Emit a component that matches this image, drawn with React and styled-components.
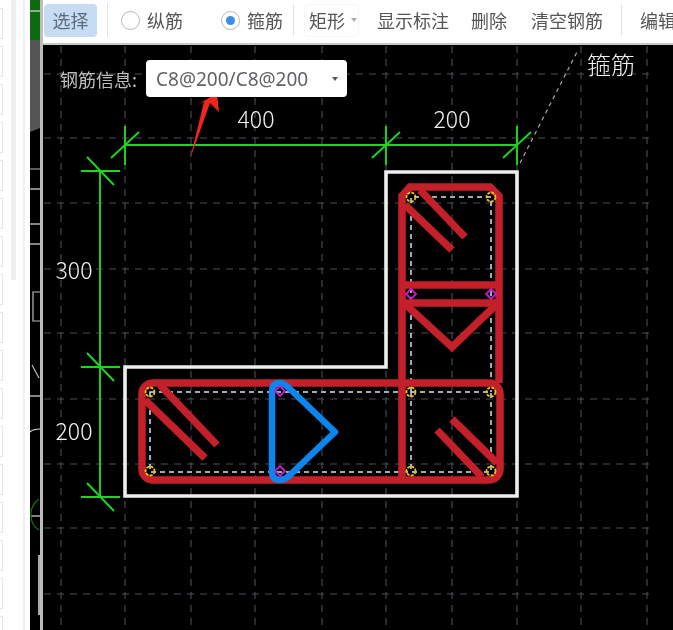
import React from "react";
import styled, { createGlobalStyle } from "styled-components";

const Global = createGlobalStyle`
  html, body { margin: 0; padding: 0; background: #fff; overflow: hidden; }
  body { font-family: "Noto Sans CJK SC", "Liberation Sans", sans-serif; }
`;

const Page = styled.div`
  display: flex;
  width: 673px;
  height: 630px;
  overflow: hidden;
  filter: blur(0.45px);
`;

const SidePanel = styled.div`
  width: 30px;
  flex: none;
  display: flex;
  background: #fff;
`;

const ListColumn = styled.div`
  width: 11px;
  flex: none;
  display: flex;
  flex-direction: column;
  gap: 7px;
  padding-top: 8px;
`;

const ListBox = styled.div`
  width: 2px;
  height: 29px;
  flex: none;
  border: 1px solid #e6e6e6;
  border-left: none;
  background: #fff;
`;

const ScrollTrack = styled.div`
  width: 5px;
  height: 280px;
  flex: none;
  background: #efefef;
`;

const PanelEdge = styled.div`
  width: 2px;
  height: 100%;
  margin-left: 7px;
  flex: none;
  background: #f0f0f0;
`;

const StripDrawing = styled.svg`
  width: 13px;
  height: 630px;
  flex: none;
  display: block;
`;

const Main = styled.div`
  flex: 1;
  min-width: 0;
  display: flex;
  flex-direction: column;
`;

const Toolbar = styled.div`
  box-sizing: content-box;
  height: 40px;
  flex: none;
  display: flex;
  align-items: center;
  background: #fff;
  border-bottom: 2px solid #c9c9c9;
  padding: 0 0 3px 1px;
  white-space: nowrap;
  color: #555;
  font-size: 18px;
`;

const SelectButton = styled.div`
  width: 53px;
  height: 33px;
  flex: none;
  display: flex;
  align-items: center;
  justify-content: center;
  background: #c6dcf3;
  border-radius: 4px;
  color: #5f6b78;
`;

const Divider = styled.div`
  width: 1px;
  height: 34px;
  flex: none;
  background: #e2e2e2;
  margin: 0 ${(p) => p.$right}px 0 ${(p) => p.$left}px;
`;

const RadioItem = styled.label`
  display: flex;
  align-items: center;
  gap: 7px;
  flex: none;
  margin-right: ${(p) => p.$right}px;
`;

const RadioCircle = styled.span`
  width: 19px;
  height: 19px;
  box-sizing: border-box;
  flex: none;
  display: flex;
  align-items: center;
  justify-content: center;
  border-radius: 50%;
  border: 1.5px solid #b8b8b8;
  background: #fff;
  &::after {
    content: "";
    width: 9px;
    height: 9px;
    border-radius: 50%;
    background: ${(p) => (p.$on ? "#3b8ee8" : "transparent")};
  }
`;

const ShapeSelect = styled.div`
  width: 55px;
  height: 33px;
  flex: none;
  box-sizing: border-box;
  display: flex;
  align-items: center;
  gap: 6px;
  padding-left: 4px;
  border: 1px solid #f6f6f6;
  border-radius: 4px;
`;

const Caret = styled.span`
  width: 0;
  height: 0;
  flex: none;
  border-left: 3.5px solid transparent;
  border-right: 3.5px solid transparent;
  border-top: 4px solid ${(p) => p.$color};
`;

const ToolLabel = styled.span`
  flex: none;
  margin-left: ${(p) => p.$left}px;
`;

const Canvas = styled.div`
  position: relative;
  flex: 1;
  min-height: 0;
  background: #000;
  overflow: hidden;
`;

const Drawing = styled.svg`
  display: block;
  width: 630px;
  height: 585px;
`;

const InfoOverlay = styled.div`
  position: absolute;
  left: 17px;
  top: 15px;
  display: flex;
  align-items: center;
  gap: 8px;
`;

const InfoLabel = styled.span`
  width: 78px;
  color: #bdbdbd;
  font-size: 18px;
  white-space: nowrap;
`;

const RebarSelect = styled.div`
  width: 201px;
  height: 37px;
  box-sizing: border-box;
  display: flex;
  align-items: center;
  justify-content: space-between;
  padding: 0 9px 0 10px;
  background: #fff;
  border-radius: 4px;
  color: #606266;
  font-family: "Noto Sans", "Liberation Sans", sans-serif;
  font-size: 19px;
`;

const CadText = styled.text`
  fill: #f0f0f0;
  font-family: "Noto Sans CJK SC", sans-serif;
  font-weight: 300;
  font-size: 23px;
  text-anchor: middle;
`;

const CadLabel = styled.text`
  fill: #f0f0f0;
  font-family: "Noto Sans CJK SC", sans-serif;
  font-weight: 300;
  font-size: 24px;
`;

const gridX = [61, 125, 191, 255, 322, 386, 452, 517, 581, 647];
const gridY = [74, 138, 203, 269, 333, 399, 464, 528, 594];
const YELLOW = [[150, 392], [150, 471], [411, 197], [491, 197], [411, 392], [491, 392], [411, 471], [491, 471]];
const PURPLE = [[411, 294], [491, 294], [280, 391], [280, 471]];
const RED = "#c4202a";
const GREEN = "#1cd81c";

const Tick = ({ x, y, vertical }) =>
  vertical ? (
    <g stroke={GREEN} strokeWidth="1.9">
      <line x1={x} y1={y - 19} x2={x} y2={y + 20} />
      <line x1={x - 14} y1={y + 13} x2={x + 14} y2={y - 13} />
    </g>
  ) : (
    <g stroke={GREEN} strokeWidth="1.9">
      <line x1={x - 19} y1={y} x2={x + 20} y2={y} />
      <line x1={x - 13} y1={y - 14} x2={x + 14} y2={y + 14} />
    </g>
  );

const Pin = ({ x, y, color, diamond }) =>
  diamond ? (
    <polygon points={`${x},${y - 5} ${x + 5},${y} ${x},${y + 5} ${x - 5},${y}`} fill="none" stroke={color} strokeWidth="1.8" />
  ) : (
    <circle cx={x} cy={y} r="4.5" fill="none" stroke={color} strokeWidth="1.8" strokeDasharray="3 1.2" />
  );

export default function App() {
  return (
    <Page>
      <Global />
      <SidePanel>
        <ListColumn>
          {Array.from({ length: 17 }, (_, i) => (
            <ListBox key={i} />
          ))}
        </ListColumn>
        <ScrollTrack />
        <PanelEdge />
      </SidePanel>
      <StripDrawing viewBox="30 0 13 630">
        <rect x="30" y="0" width="13" height="630" fill="#000" />
        <polygon points="30,0 40,0 40,40 35,40 30,42" fill="#0c6a10" />
        <polygon points="30,40 35,40 40,40 40,128 30,132" fill="#555" />
        <g stroke="#ddd" strokeWidth="1.2" fill="none">
          <line x1="30" y1="11" x2="40" y2="11" />
          <line x1="30" y1="169" x2="40" y2="169" stroke="#999" />
          <line x1="30" y1="189" x2="40" y2="189" />
          <line x1="30" y1="224" x2="40" y2="224" />
          <line x1="30" y1="244" x2="40" y2="244" />
          <path d="M40 292 H33 V321 H40" stroke="#bbb" />
          <line x1="32" y1="365" x2="39" y2="378" stroke="#bbb" />
          <line x1="30" y1="396" x2="40" y2="396" />
          <path d="M30 432 Q33 429 40 429" />
          <line x1="31" y1="516" x2="40" y2="516" />
        </g>
        <path d="M39 499 Q30 506 31 516 Q31 525 39 530" fill="none" stroke="#126d20" strokeWidth="1.3" />
        <rect x="40" y="0" width="3" height="630" fill="#bdbdbd" />
        <rect x="38" y="555" width="2" height="60" fill="#aaa" />
      </StripDrawing>
      <Main>
        <Toolbar>
          <SelectButton>选择</SelectButton>
          <Divider $left={10} $right={13} />
          <RadioItem $right={38}>
            <RadioCircle />
            纵筋
          </RadioItem>
          <RadioItem $right={10}>
            <RadioCircle $on />
            箍筋
          </RadioItem>
          <Divider $left={0} $right={10} />
          <ShapeSelect>
            矩形
            <Caret $color="#aaa" />
          </ShapeSelect>
          <ToolLabel $left={18}>显示标注</ToolLabel>
          <ToolLabel $left={22}>删除</ToolLabel>
          <ToolLabel $left={24}>清空钢筋</ToolLabel>
          <Divider $left={18} $right={18} />
          <ToolLabel $left={0}>编辑</ToolLabel>
        </Toolbar>
        <Canvas>
          <Drawing viewBox="43 45 630 585">
            <g stroke="#4c4c58" strokeWidth="1.1" strokeDasharray="7 6" fill="none">
              {gridX.map((x) => (
                <line key={x} x1={x} y1="46" x2={x} y2="630" />
              ))}
              {gridY.map((y) => (
                <line key={y} x1="44" y1={y} x2="650" y2={y} />
              ))}
            </g>
            <line x1="520" y1="163" x2="578" y2="50" stroke="#aaa" strokeWidth="1.2" strokeDasharray="4 4" />
            <path d="M386 172 H517 V496 H125 V367 H386 Z" fill="none" stroke="#eeeeee" strokeWidth="3.6" />
            <g stroke={GREEN} strokeWidth="1.9">
              <line x1="125" y1="145" x2="517" y2="145" />
              <line x1="100" y1="171" x2="100" y2="497" />
            </g>
            <Tick x={125} y={145} vertical />
            <Tick x={386} y={145} vertical />
            <Tick x={517} y={145} vertical />
            <Tick x={100} y={171} />
            <Tick x={100} y={367} />
            <Tick x={100} y={497} />

            <g fill="none" stroke="#d8e4ee" strokeWidth="1.5" strokeDasharray="5 4">
              <rect x="150" y="392" width="341" height="80" />
              <path d="M411 392 V197 H491 V392" />
              <line x1="411" y1="392" x2="411" y2="472" />
            </g>

            <g fill="none" stroke={RED} strokeWidth="7.5">
              <rect x="142" y="383" width="358" height="97" rx="11" />
              <path d="M402 383 V196 L410 187 H490 L499 196 V383" />
              <line x1="402" y1="285" x2="499" y2="285" />
              <line x1="402" y1="303" x2="499" y2="303" />
              <path d="M404 303 L452 347 L498 303" />
              <line x1="402" y1="383" x2="402" y2="480" />
              <line x1="420" y1="190" x2="465" y2="237" />
              <line x1="405" y1="205" x2="452" y2="250" />
              <line x1="160" y1="385" x2="217" y2="445" />
              <line x1="145" y1="400" x2="205" y2="458" />
              <line x1="452" y1="419" x2="497" y2="463" />
              <line x1="437" y1="430" x2="482" y2="477" />
            </g>
            <path
              d="M335 432 L290 389 Q284 383 280 383 Q272 383 272 392 V471 Q272 480 280 480 Q285 480 290 475 Z"
              fill="none"
              stroke="#0a86ee"
              strokeWidth="6.5"
              strokeLinejoin="round"
            />
            {YELLOW.map(([x, y]) => (
              <Pin key={`${x}-${y}`} x={x} y={y} color="#e8c31e" />
            ))}
            {PURPLE.map(([x, y]) => (
              <Pin key={`${x}-${y}`} x={x} y={y} color="#c020d0" diamond />
            ))}

            <CadText x="256" y="128">400</CadText>
            <CadText x="452" y="128">200</CadText>
            <CadText x="74" y="279">300</CadText>
            <CadText x="74" y="440">200</CadText>
            <CadLabel x="587" y="74">箍筋</CadLabel>
            <polygon points="217,93 219,112 210,103 190,159 204,102 199,104" fill="#f0261e" />
          </Drawing>
          <InfoOverlay>
            <InfoLabel>钢筋信息:</InfoLabel>
            <RebarSelect>
              C8@200/C8@200
              <Caret $color="#555" />
            </RebarSelect>
          </InfoOverlay>
        </Canvas>
      </Main>
    </Page>
  );
}
